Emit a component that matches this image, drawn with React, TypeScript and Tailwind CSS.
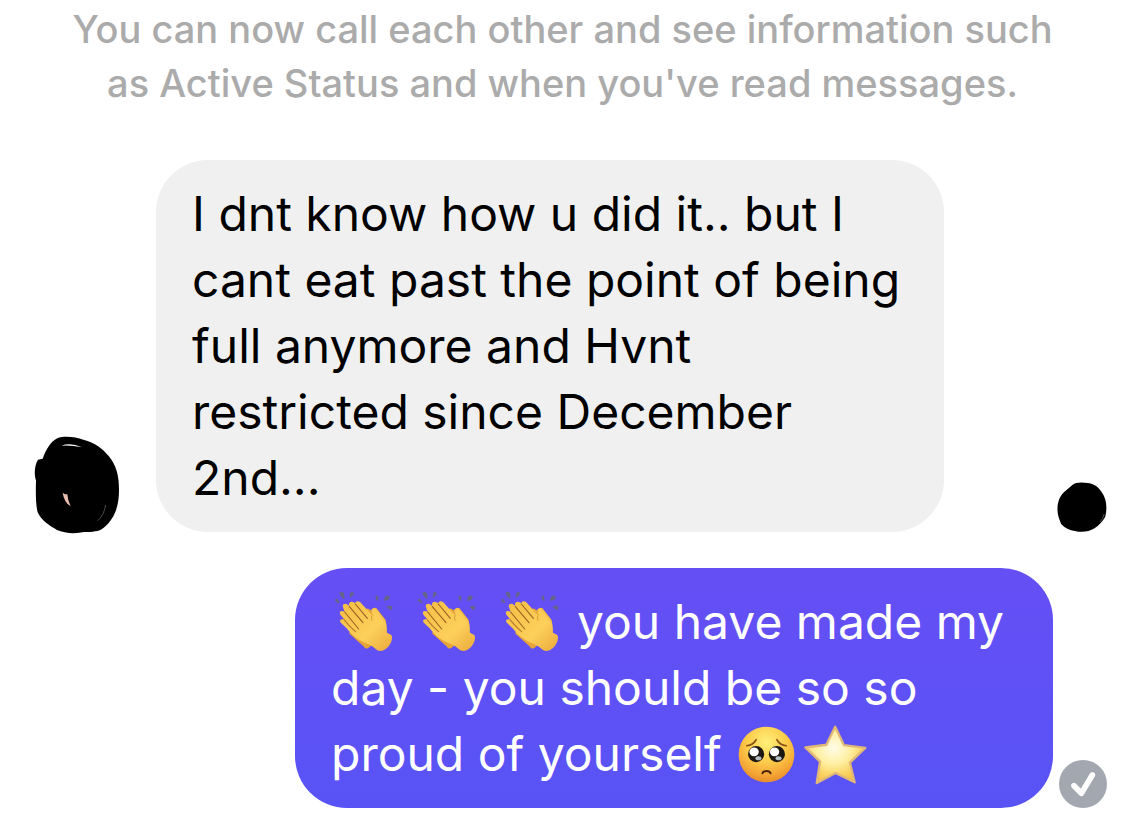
import type { ReactNode } from "react";

function ClapEmoji() {
  return (
    <svg
      role="img"
      aria-label="Clapping hands"
      viewBox="35 35 186 186"
      className="size-[62px] shrink-0"
    >
      <defs>
        <linearGradient id="clap-skin" x1="0" y1="0" x2="1" y2="1">
          <stop offset="0" stopColor="#f3bd45" />
          <stop offset="0.6" stopColor="#fdd05a" />
          <stop offset="1" stopColor="#e9a93c" />
        </linearGradient>
      </defs>
      <g fill="#65658a">
        <path d="M60 40q10-5 14 2l2 18q-13-7-16-20z" />
        <path d="M92 42q4-6 9-3 5 4 1 8l-11 9z" />
        <path d="M47 62q3-6 8-2l6 11q-12 1-14-9z" />
        <path d="M168 52q4-6 8-2l2 16q-9-3-10-14z" />
        <path d="M193 65l4-13q6-7 13-1 4 5-4 11z" />
        <path d="M201 83q12-7 18-1 0 8-5 11z" />
      </g>
      {/* back hand */}
      <path
        d="M138 92q7-9 15 1l9-6q8-4 12 3l25 32 3 38-55 46q-10 5-13-4l-45-40z"
        fill="#e5a43a"
      />
      <path
        d="M157 92q6-11 15-2l23 29q9 14 7 39l-34-34z"
        fill="#f6c54d"
      />
      {/* front hand */}
      <path
        d="M71 84C68 75 76 71 83 75L90 80C86 69 95 64 103 69L108 72C108 65 117 64 123 69L158 108L161 109C155 98 156 89 164 91C173 95 181 112 193 128C200 137 200 153 203 160L216 167C222 177 214 199 199 209C190 216 177 217 169 209C159 199 145 193 136 190C112 181 94 162 82 147L66 132C59 126 63 118 70 120L74 119L63 106C59 98 64 93 71 96L76 97Z"
        fill="url(#clap-skin)"
      />
      <g
        fill="none"
        stroke="#9d6424"
        strokeWidth="3.5"
        strokeLinecap="round"
      >
        <path d="M108 74l36 43" />
        <path d="M90 82l41 48" />
        <path d="M76 98l42 51" />
        <path d="M74 121q20 24 35 36" stroke="#b87a2c" />
      </g>
      <path
        d="M158 109q-4 5 0 14"
        fill="none"
        stroke="#d99a36"
        strokeWidth="3"
        strokeLinecap="round"
      />
    </svg>
  );
}

function PleadingEmoji() {
  return (
    <svg
      role="img"
      aria-label="Pleading face"
      viewBox="57 47 170 170"
      className="size-[57px] shrink-0"
    >
      <defs>
        <radialGradient id="face" cx="0.5" cy="0.28" r="0.72">
          <stop offset="0" stopColor="#fff07a" />
          <stop offset="0.5" stopColor="#fccb4a" />
          <stop offset="0.85" stopColor="#f3a233" />
          <stop offset="1" stopColor="#e58c2c" />
        </radialGradient>
      </defs>
      <circle cx="142" cy="132" r="83" fill="url(#face)" />
      <g
        fill="none"
        stroke="#8a4f14"
        strokeWidth="5"
        strokeLinecap="round"
      >
        <path d="M83 106q19-2 28-18" />
        <path d="M173 88q9 16 28 18" />
      </g>
      <circle cx="111" cy="131" r="24" fill="#1d1713" />
      <circle cx="173" cy="131" r="24" fill="#1d1713" />
      <g fill="#fff">
        <ellipse cx="105" cy="124" rx="14" ry="13" />
        <ellipse cx="166" cy="124" rx="14" ry="13" />
        <ellipse cx="118" cy="143" rx="9" ry="6" fill="#b3bfc4" />
        <ellipse cx="178" cy="143" rx="9" ry="6" fill="#b3bfc4" />
      </g>
      <path
        d="M130 188q2-7 12-7t12 7"
        fill="none"
        stroke="#4d250e"
        strokeWidth="6"
        strokeLinecap="round"
      />
    </svg>
  );
}

function StarEmoji() {
  return (
    <svg
      role="img"
      aria-label="Star"
      viewBox="254 39 188 182"
      className="h-[61px] w-[63px] shrink-0"
    >
      <defs>
        <radialGradient id="star" cx="0.47" cy="0.38" r="0.7">
          <stop offset="0" stopColor="#fffce8" />
          <stop offset="0.4" stopColor="#fff0a4" />
          <stop offset="0.75" stopColor="#f9ce58" />
          <stop offset="1" stopColor="#edb24a" />
        </radialGradient>
      </defs>
      <path
        d="M347 47l26 55 64 8-46 44 14 59-57-28-56 30 10-64-44-42 63-8z"
        fill="url(#star)"
        stroke="#e0b878"
        strokeWidth="7"
        strokeLinejoin="round"
      />
    </svg>
  );
}

function SenderAvatar() {
  return (
    <svg
      role="img"
      aria-label="Sender"
      viewBox="47 48 255 288"
      className="h-24 w-[85px] shrink-0 overflow-visible"
    >
      <path d="M70 116C79 91 94 64 114 55C133 47 168 50 192 59C227 68 250 86 268 108C291 137 299 165 299 211C299 255 288 296 252 324C239 335 219 336 194 336C168 342 135 340 113 330C92 318 66 302 55 277C49 255 49 213 50 181C44 166 45 135 56 119Z" />
      <path d="M126 77Q154 67 188 82Q155 75 126 77Z" fill="#fff" />
      <path
        d="M130 218L137 223L144 223Q145 240 154 259Q134 247 130 218Z"
        fill="#e9beb0"
      />
      <path
        d="M259 255q-5 31-24 47"
        fill="none"
        stroke="#737373"
        strokeWidth="2"
      />
    </svg>
  );
}

function SeenAvatar() {
  return (
    <svg
      role="img"
      aria-label="Seen"
      viewBox="52 35 150 151"
      className="size-[50px] shrink-0"
    >
      <path d="M98 44C108 36 123 35 145 38C166 41 179 52 187 67C201 84 204 116 197 141C189 155 178 166 165 175C148 186 124 188 106 183C89 181 75 175 64 162C59 148 52 135 53 115C53 96 61 74 75 64Z" />
      <path
        d="M194 132q-3 14-13 24"
        fill="none"
        stroke="#777"
        strokeWidth="2"
      />
    </svg>
  );
}

function DeliveredIcon() {
  return (
    <svg
      role="img"
      aria-label="Delivered"
      viewBox="57 59 144 144"
      className="size-12 shrink-0"
    >
      <circle cx="129" cy="131" r="72" fill="#a3a7b0" />
      <path
        d="M102 136l22 23 33-55"
        fill="none"
        stroke="#fff"
        strokeWidth="17"
        strokeLinecap="round"
        strokeLinejoin="round"
      />
    </svg>
  );
}

function Line({ children }: { children: ReactNode }) {
  return <span className="flex items-center whitespace-nowrap">{children}</span>;
}

export default function App() {
  return (
    <main className="min-h-screen bg-white pt-0.5 pb-[18px] font-['Inter',sans-serif]">
      <p className="text-center text-[38px] leading-[54px] font-medium text-[#ababab]">
        You can now call each other and see information such
        <br />
        as Active Status and when you've read messages.
      </p>

      <div className="mt-[50px] flex items-end pr-[18px] pl-[35px]">
        <SenderAvatar />
        <p className="mr-[113px] ml-9 flex-1 rounded-[52px] bg-[#f0f0f0] px-9 py-[21px] text-5xl leading-[66px] text-black">
          <Line>I dnt know how u did it.. but I</Line>
          <Line>cant eat past the point of being</Line>
          <Line>full anymore and Hvnt</Line>
          <Line>restricted since December</Line>
          <Line>2nd...</Line>
        </p>
        <SeenAvatar />
      </div>

      <div className="mt-9 flex items-end gap-1.5 pr-[18px] pl-[295px]">
        <p className="flex-1 rounded-[52px] bg-linear-to-b from-[#654ff5] to-[#5853f5] px-9 py-[21px] text-5xl leading-[66px] text-white">
          <Line>
            <span className="mr-[18px] flex gap-[21px]">
              <ClapEmoji />
              <ClapEmoji />
              <ClapEmoji />
            </span>
            you have made my
          </Line>
          <Line>day - you should be so so</Line>
          <Line>
            proud of yourself
            <span className="ml-4 flex items-center gap-[9px]">
              <PleadingEmoji />
              <StarEmoji />
            </span>
          </Line>
        </p>
        <DeliveredIcon />
      </div>
    </main>
  );
}
